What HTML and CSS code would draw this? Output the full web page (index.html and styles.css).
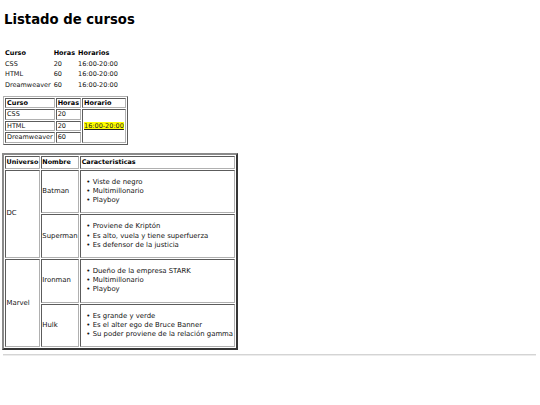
FILE: index.html
```html
<!DOCTYPE html>
<html lang="es">
<head>
<meta charset="utf-8">
<title>Listado de cursos</title>
<link rel="stylesheet" href="styles.css">
</head>
<body>
<h1 class="title">Listado de cursos</h1>
<table class="plain">
  <tr><th>Curso</th><th>Horas</th><th>Horarios</th></tr>
  <tr><td>CSS</td><td>20</td><td>16:00-20:00</td></tr>
  <tr><td>HTML</td><td>60</td><td>16:00-20:00</td></tr>
  <tr><td>Dreamweaver</td><td>60</td><td>16:00-20:00</td></tr>
</table>
<table class="bordered">
  <tr><th>Curso</th><th>Horas</th><th>Horario</th></tr>
  <tr><td>CSS</td><td>20</td><td rowspan="3"><a class="hl" href="#">16:00-20:00</a></td></tr>
  <tr><td>HTML</td><td>20</td></tr>
  <tr><td>Dreamweaver</td><td>60</td></tr>
</table>
<table class="heroes">
  <tr><th>Universo</th><th>Nombre</th><th>Caracteristicas</th></tr>
  <tr>
    <td rowspan="2">DC</td>
    <td>Batman</td>
    <td><ul class="traits"><li>Viste de negro</li><li>Multimillonario</li><li>Playboy</li></ul></td>
  </tr>
  <tr>
    <td>Superman</td>
    <td><ul class="traits"><li>Proviene de Kriptón</li><li>Es alto, vuela y tiene superfuerza</li><li>Es defensor de la justicia</li></ul></td>
  </tr>
  <tr>
    <td rowspan="2">Marvel</td>
    <td>Ironman</td>
    <td><ul class="traits"><li>Dueño de la empresa STARK</li><li>Multimillonario</li><li>Playboy</li></ul></td>
  </tr>
  <tr>
    <td>Hulk</td>
    <td><ul class="traits"><li>Es grande y verde</li><li>Es el alter ego de Bruce Banner</li><li>Su poder proviene de la relación gamma</li></ul></td>
  </tr>
</table>
<hr class="rule">
</body>
</html>
```
FILE: styles.css
```css
html, body {
  background: #fff;
}
body {
  margin: 0;
  padding: 0 4px 0 3px;
  font-family: "DejaVu Sans", Verdana, sans-serif;
  color: #111;
}
.title {
  font-family: "DejaVu Sans Condensed", "DejaVu Sans", sans-serif;
  font-stretch: condensed;
  font-size: 14.7px;
  line-height: 18px;
  font-weight: bold;
  margin: 9.5px 0 0 1px;
  padding: 0;
  color: #000;
}
table {
  border-collapse: separate;
}
th, td {
  text-align: left;
}
th { font-weight: bold; color: #000; }

/* plain table */
.plain {
  margin-top: 20.5px;
  border-spacing: 1px;
  font-size: 6.5px;
  line-height: 9.7px;
}
.plain th, .plain td {
  padding: 0 1px;
}

/* bordered table */
.bordered {
  margin-top: 4px;
  border: 1px outset #b0b0b0;
  border-spacing: 1px;
  font-size: 6.5px;
  line-height: 8.5px;
}
.bordered th, .bordered td {
  border: 1px inset #b0b0b0;
  padding: 0 1px;
}
.hl {
  color: #222;
  background: #ffff00;
  text-decoration: underline;
}

/* heroes table */
.heroes {
  margin-top: 8px;
  margin-left: -1px;
  border: 2px outset #8a8a8a;
  border-spacing: 1px;
  font-size: 6.9px;
  line-height: 9px;
}
.heroes th {
  font-size: 6.4px;
}
.heroes th, .heroes td {
  border: 1px inset #b0b0b0;
  padding: 1px 0.5px;
}
.traits {
  margin: 6px 0;
  padding-left: 4.5px;
  list-style: none;
  line-height: 9.2px;
}
.traits li::before {
  content: "\2022";
  display: inline-block;
  width: 6.5px;
}
.rule {
  margin: 3.5px 0 0;
  border: 0;
  border-top: 1px solid #d4d4d4;
  border-bottom: 1px solid #ececec;
  height: 0;
}
```
